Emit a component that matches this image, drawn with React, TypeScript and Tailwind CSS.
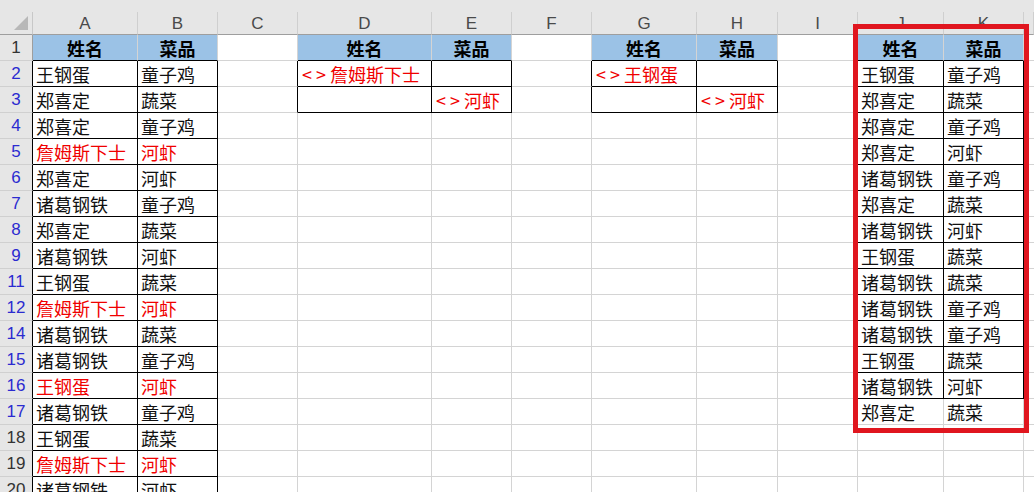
import React from 'react';

const cols = ['', 'A', 'B', 'C', 'D', 'E', 'F', 'G', 'H', 'I', 'J', 'K', ''];
const rows = [1, 2, 3, 4, 5, 6, 7, 8, 9, 11, 12, 14, 15, 16, 17, 18, 19, 20];

// rows 2..20 of columns A:B, true = red (filtered-out name)
const left: [string, string, boolean][] = [
  ['王钢蛋', '童子鸡', false],
  ['郑喜定', '蔬菜', false],
  ['郑喜定', '童子鸡', false],
  ['詹姆斯下士', '河虾', true],
  ['郑喜定', '河虾', false],
  ['诸葛钢铁', '童子鸡', false],
  ['郑喜定', '蔬菜', false],
  ['诸葛钢铁', '河虾', false],
  ['王钢蛋', '蔬菜', false],
  ['詹姆斯下士', '河虾', true],
  ['诸葛钢铁', '蔬菜', false],
  ['诸葛钢铁', '童子鸡', false],
  ['王钢蛋', '河虾', true],
  ['诸葛钢铁', '童子鸡', false],
  ['王钢蛋', '蔬菜', false],
  ['詹姆斯下士', '河虾', true],
  ['诸葛钢铁', '河虾', false],
];

// result in J:K
const right: [string, string][] = [
  ['王钢蛋', '童子鸡'],
  ['郑喜定', '蔬菜'],
  ['郑喜定', '童子鸡'],
  ['郑喜定', '河虾'],
  ['诸葛钢铁', '童子鸡'],
  ['郑喜定', '蔬菜'],
  ['诸葛钢铁', '河虾'],
  ['王钢蛋', '蔬菜'],
  ['诸葛钢铁', '蔬菜'],
  ['诸葛钢铁', '童子鸡'],
  ['诸葛钢铁', '童子鸡'],
  ['王钢蛋', '蔬菜'],
  ['诸葛钢铁', '河虾'],
  ['郑喜定', '蔬菜'],
];

const inTable = (ri: number, c: number) => {
  if (c === 1 || c === 2) return true;
  if (c === 4 || c === 5 || c === 7 || c === 8) return ri <= 2;
  if (c === 10 || c === 11) return ri <= 13;
  return false;
};

type CellData = { text: string; red?: boolean; head?: boolean; crit?: boolean };

function cellAt(ri: number, c: number): CellData {
  if (ri === 0) {
    if ([1, 4, 7, 10].includes(c)) return { text: '姓名', head: true };
    if ([2, 5, 8, 11].includes(c)) return { text: '菜品', head: true };
    return { text: '' };
  }
  if (c === 1 || c === 2) {
    const r = left[ri - 1];
    return { text: c === 1 ? r[0] : r[1], red: r[2] };
  }
  if ((c === 10 || c === 11) && ri <= 14 && right[ri - 1]) {
    const r = right[ri - 1];
    return { text: c === 10 ? r[0] : r[1] };
  }
  // criteria ranges
  if (ri === 1 && c === 4) return { text: '詹姆斯下士', red: true, crit: true };
  if (ri === 2 && c === 5) return { text: '河虾', red: true, crit: true };
  if (ri === 1 && c === 7) return { text: '王钢蛋', red: true, crit: true };
  if (ri === 2 && c === 8) return { text: '河虾', red: true, crit: true };
  return { text: '' };
}

function Corner() {
  return (
    <div className="h-[23px] bg-[#e6e6e6] border-r border-r-[#c8c8c8] border-b border-b-[#9e9e9e] flex items-end justify-end">
      <svg width="18" height="18" viewBox="0 0 18 18" className="mb-[2px] mr-[2px]">
        <polygon points="2,16 16,16 16,2" fill="#b8b8b8" />
      </svg>
    </div>
  );
}

export default function App() {
  return (
    <div className="relative w-[1034px] h-[492px] overflow-hidden bg-white font-['Noto_Sans_CJK_SC','Liberation_Sans',sans-serif]">
      <div className="h-3 bg-[#e6e6e6]" />
      <div className="grid grid-cols-[33px_105px_80px_80px_134px_80px_80px_105px_81px_80px_86px_80px_1fr]">
        <Corner />
        {cols.slice(1).map((l, i) => (
          <div
            key={'h' + i}
            className="h-[23px] bg-[#e6e6e6] border-r border-r-[#cfcfcf] border-b border-b-[#9e9e9e] flex items-center justify-center text-[17px] leading-none text-[#4a4a4a] font-['Liberation_Sans',sans-serif]"
          >
            {l}
          </div>
        ))}
        {rows.map((rn, ri) => (
          <React.Fragment key={rn}>
            <div
              className={`h-[26px] bg-[#e6e6e6] border-b border-b-[#d0d0d0] border-r ${ri >= 1 ? 'border-r-black' : 'border-r-[#9e9e9e]'} flex items-center justify-center text-[17px] leading-none font-['Liberation_Sans',sans-serif] ${rn >= 2 && rn <= 17 ? 'text-[#2b2bd0]' : 'text-[#333]'}`}
            >
              {rn}
            </div>
            {cols.slice(1).map((_, k) => {
              const c = k + 1;
              const d = cellAt(ri, c);
              const rightBlack = ri >= 1 && (inTable(ri, c) || inTable(ri, c + 1));
              const bottomBlack = inTable(ri, c);
              const blue = d.head;
              return (
                <div
                  key={c}
                  className={`h-[26px] flex items-center overflow-visible whitespace-nowrap text-[18px] leading-none ${c === 12 ? '' : 'border-r'} border-b ${rightBlack ? 'border-r-black' : 'border-r-[#d4d4d4]'} ${bottomBlack ? 'border-b-black' : 'border-b-[#d4d4d4]'} ${blue ? 'bg-[#9bc2e6] justify-center font-bold text-black' : 'pl-[3px] pt-[1px]'} ${d.red ? 'text-[#f00000]' : 'text-[#111]'}`}
                >
                  {d.crit && <span className="tracking-[4px] pl-[1px]">&lt;&gt;</span>}
                  {d.text}
                </div>
              );
            })}
          </React.Fragment>
        ))}
      </div>
      <div className="absolute left-[853px] top-[24px] w-[176px] h-[409px] border-[5px] border-[#e0161f] pointer-events-none" />
    </div>
  );
}
